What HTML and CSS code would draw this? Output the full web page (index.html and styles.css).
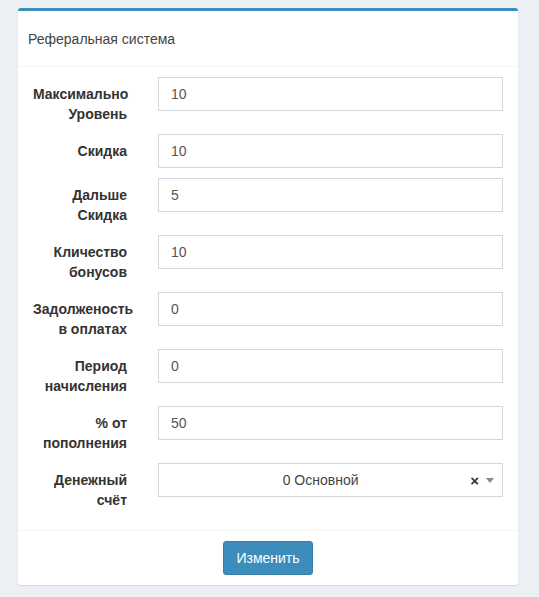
FILE: index.html
```html
<!DOCTYPE html>
<html lang="ru">
<head>
<meta charset="utf-8">
<title>Реферальная система</title>
<link rel="stylesheet" href="styles.css">
</head>
<body>
<div class="box">
  <div class="box-header">
    <h3 class="box-title">Реферальная система</h3>
  </div>
  <form class="box-body">
    <div class="form-group">
      <label class="control-label">Максимально Уровень</label>
      <input class="form-control" type="text" value="10">
    </div>
    <div class="form-group">
      <label class="control-label">Скидка</label>
      <input class="form-control" type="text" value="10">
    </div>
    <div class="form-group">
      <label class="control-label">Дальше Скидка</label>
      <input class="form-control" type="text" value="5">
    </div>
    <div class="form-group">
      <label class="control-label">Кличество бонусов</label>
      <input class="form-control" type="text" value="10">
    </div>
    <div class="form-group">
      <label class="control-label">Задолженость в оплатах</label>
      <input class="form-control" type="text" value="0">
    </div>
    <div class="form-group">
      <label class="control-label">Период начисления</label>
      <input class="form-control" type="text" value="0">
    </div>
    <div class="form-group">
      <label class="control-label">% от пополнения</label>
      <input class="form-control" type="text" value="50">
    </div>
    <div class="form-group">
      <label class="control-label">Денежный счёт</label>
      <div class="select2">
        <span class="select2-value">0 Основной</span>
        <span class="select2-clear">×</span>
        <span class="select2-arrow"></span>
      </div>
    </div>
  </form>
  <div class="box-footer">
    <button class="btn-primary" type="button">Изменить</button>
  </div>
</div>
</body>
</html>
```
FILE: styles.css
```css
* { box-sizing: border-box; }
html, body { margin: 0; }
body {
  background: #ecf0f5;
  padding: 8px 21px 12px 18px;
  font-family: "Liberation Sans", Arial, sans-serif;
  font-size: 14px;
  color: #333;
}
.box {
  background: #fff;
  border-top: 3px solid #3c8dbc;
  border-radius: 3px;
  box-shadow: 0 1px 1px rgba(0,0,0,0.1);
}
.box-header {
  padding: 18px 10px 17px 10px;
  border-bottom: 1px solid #f4f4f4;
}
.box-title {
  margin: 0;
  font-size: 14px;
  font-weight: normal;
  line-height: 20px;
  color: #444;
}
.box-body {
  padding: 10px 15px 10px 15px;
  display: flex;
  flex-direction: column;
}
.form-group {
  display: flex;
  align-items: flex-start;
  margin-bottom: 10px;
}
.control-label {
  width: 94px;
  flex: none;
  margin-right: 31px;
  padding-top: 7px;
  font-weight: bold;
  line-height: 20px;
  text-align: right;
  color: #333;
}
.form-control, .select2 {
  flex: 1;
  height: 34px;
  border: 1px solid #d2d6de;
  background: #fff;
  font-family: inherit;
  font-size: 14px;
  color: #555;
  margin-right: 0;
}
.form-control {
  padding: 6px 12px;
  outline: none;
}
.select2 {
  display: flex;
  align-items: center;
  padding: 0 8px 0 12px;
}
.select2-value {
  flex: 1;
  text-align: center;
  color: #444;
}
.select2-clear {
  font-weight: bold;
  font-size: 15px;
  color: #333;
  margin-right: 7px;
  line-height: 1;
}
.select2-arrow {
  width: 0;
  height: 0;
  border-left: 4px solid transparent;
  border-right: 4px solid transparent;
  border-top: 5px solid #888;
}
.box-footer {
  border-top: 1px solid #f4f4f4;
  padding: 10px;
  display: flex;
  justify-content: center;
}
.btn-primary {
  height: 34px;
  padding: 6px 12px;
  font-family: inherit;
  font-size: 14px;
  line-height: 20px;
  color: #fff;
  background: #3c8dbc;
  border: 1px solid #367fa9;
  border-radius: 3px;
}
```
